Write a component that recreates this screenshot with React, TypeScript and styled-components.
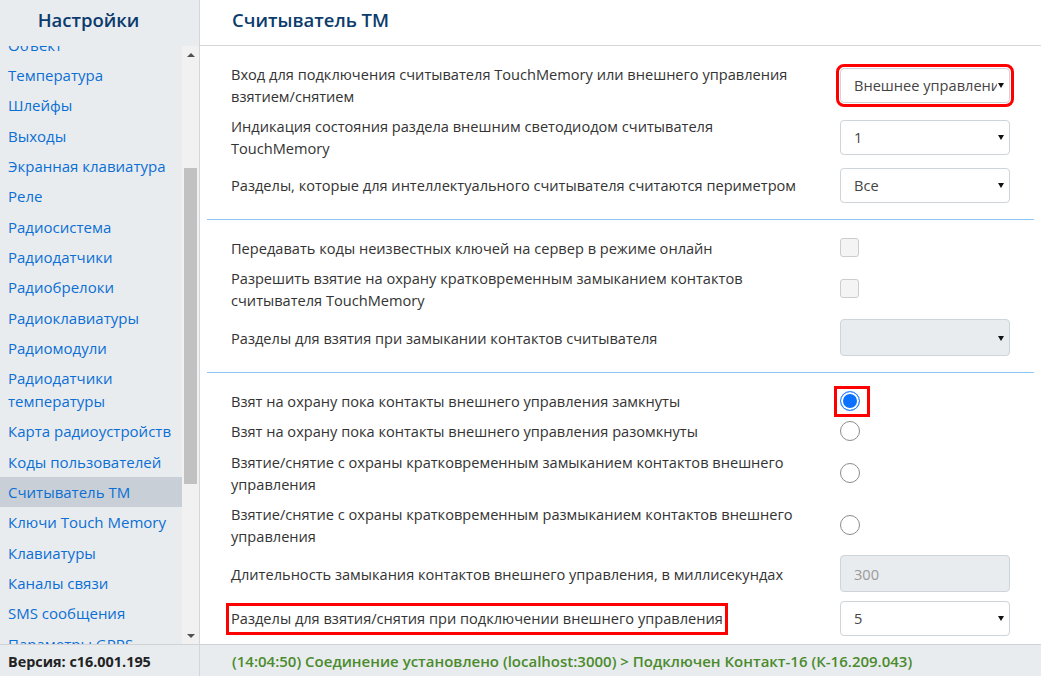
import React, { useLayoutEffect, useRef } from "react";
import styled, { createGlobalStyle } from "styled-components";

const GlobalStyle = createGlobalStyle`
  html, body {
    margin: 0;
    padding: 0;
    height: 100%;
  }
  body {
    font-family: "Open Sans", "Liberation Sans", sans-serif;
    background: #fff;
    color: #333;
    overflow: hidden;
  }
  #root {
    height: 100%;
  }
`;

const Page = styled.div`
  display: flex;
  flex-direction: column;
  height: 100vh;
`;

const Body = styled.div`
  flex: 1;
  display: flex;
  min-height: 0;
`;

/* ---------- sidebar ---------- */

const Sidebar = styled.aside`
  width: 199px;
  flex-shrink: 0;
  border-right: 1px solid #d2d5d9;
  background: #e9ecef;
  display: flex;
  flex-direction: column;
`;

const SidebarTitle = styled.div`
  height: 46px;
  line-height: 40px;
  padding-right: 22px;
  text-align: center;
  font-size: 18.5px;
  font-weight: 600;
  color: #0b3a6d;
`;

const SidebarScroll = styled.div`
  flex: 1;
  display: flex;
  min-height: 0;
`;

const NavViewport = styled.div`
  position: relative;
  flex: 1;
  overflow: hidden;
`;

const NavItem = styled.div<{ $active?: boolean }>`
  padding: 4px 8px;
  font-size: 15px;
  line-height: 22.35px;
  color: #0b6fd4;
  background: ${(p) => (p.$active ? "#c9cfd7" : "transparent")};
  cursor: pointer;
`;

const ScrollTrack = styled.div`
  width: 17px;
  background: #f1f1f1;
  display: flex;
  flex-direction: column;
`;

const ScrollArrow = styled.div<{ $down?: boolean }>`
  height: 17px;
  display: flex;
  align-items: center;
  justify-content: center;

  &::before {
    content: "";
    border-left: 4px solid transparent;
    border-right: 4px solid transparent;
    ${(p) =>
      p.$down
        ? "border-top: 4px solid #505050;"
        : "border-bottom: 4px solid #505050;"}
  }
`;

const ScrollRail = styled.div`
  flex: 1;
  padding: 105px 2px 0;
`;

const ScrollThumb = styled.div`
  height: 316px;
  background: #c1c1c1;
`;

/* ---------- main panel ---------- */

const Main = styled.main`
  flex: 1;
  display: flex;
  flex-direction: column;
  min-width: 0;
`;

const MainHeader = styled.h1`
  margin: 0;
  height: 45px;
  line-height: 40px;
  padding-left: 32px;
  border-bottom: 1px solid #d6d6d6;
  font-size: 18.5px;
  font-weight: 600;
  color: #0c3c6c;
`;

const Content = styled.div`
  flex: 1;
  overflow: hidden;
`;

const Section = styled.section`
  margin: 0 7px;
  padding: 17px 24px 16px;
  display: flex;
  flex-direction: column;
  gap: 8.3px;

  & + & {
    border-top: 1px solid #8cc4f5;
  }
`;

const Row = styled.div`
  display: grid;
  grid-template-columns: 1fr 170px;
  column-gap: 28px;
  align-items: center;
`;

const Label = styled.div`
  font-size: 14.6px;
  line-height: 22px;
  color: #333;
`;

const Marked = styled.span`
  position: relative;
  display: inline-block;

  &::after {
    content: "";
    position: absolute;
    top: -4px;
    bottom: -6px;
    left: -5px;
    right: -5px;
    border: 3px solid #ff0000;
    pointer-events: none;
  }
`;

const Control = styled.div`
  display: flex;
  align-items: center;
`;

const SelectBox = styled.div<{ $disabled?: boolean; $marked?: boolean }>`
  position: relative;
  box-sizing: border-box;
  width: 100%;
  height: ${(p) => (p.$disabled ? "37px" : "35px")};
  display: flex;
  align-items: center;
  padding: 0 12px 0 13px;
  border: 1px solid #ced4da;
  border-radius: 4px;
  background: ${(p) => (p.$disabled ? "#e9ecef" : "#fff")};
  font-size: 14.6px;
  color: #444;
  outline: ${(p) => (p.$marked ? "3px solid #ff0000" : "none")};
  outline-offset: 1px;

  &::after {
    content: "";
    position: absolute;
    right: 5px;
    top: 50%;
    margin-top: -2px;
    border-left: 3.5px solid transparent;
    border-right: 3.5px solid transparent;
    border-top: 5px solid #111;
  }
`;

const SelectValue = styled.span`
  flex: 1;
  overflow: hidden;
  white-space: nowrap;
`;

const NumberInput = styled.div`
  box-sizing: border-box;
  width: 100%;
  height: 37px;
  display: flex;
  align-items: center;
  padding: 0 13px;
  border: 1px solid #ced4da;
  border-radius: 4px;
  background: #e9ecef;
  font-size: 14.6px;
  color: #9a9a9a;
`;

const Checkbox = styled.span`
  box-sizing: border-box;
  width: 19px;
  height: 19px;
  border: 1px solid #cdcdcd;
  border-radius: 3px;
  background: #f4f4f4;
`;

const Radio = styled.span<{ $checked?: boolean }>`
  box-sizing: border-box;
  width: 20px;
  height: 20px;
  border-radius: 50%;
  border: 1px solid ${(p) => (p.$checked ? "#2f86ff" : "#8c8c8c")};
  background: ${(p) => (p.$checked ? "#0a72ff" : "#fff")};
  box-shadow: ${(p) => (p.$checked ? "inset 0 0 0 2px #fff" : "none")};
`;

const RadioMark = styled.span`
  position: relative;
  display: inline-flex;

  &::after {
    content: "";
    position: absolute;
    top: -5px;
    left: -6px;
    right: -10px;
    bottom: -6px;
    border: 3px solid #ff0000;
    pointer-events: none;
  }
`;

/* ---------- footer ---------- */

const Footer = styled.footer`
  height: 31px;
  flex-shrink: 0;
  display: flex;
  border-top: 1px solid #cfd3d7;
  background: #e9ecef;
  font-size: 15px;
  line-height: 29px;
`;

const Version = styled.div`
  width: 191px;
  padding: 2px 0 0 8px;
  border-right: 1px solid #d2d5d9;
  font-size: 14.4px;
  font-weight: 700;
  color: #222;
`;

const Status = styled.div`
  padding: 2px 0 0 32px;
  font-weight: 600;
  color: #4a8b2c;
  white-space: nowrap;
`;

const navItems = [
  "Общие",
  "Разделы",
  "Объект",
  "Температура",
  "Шлейфы",
  "Выходы",
  "Экранная клавиатура",
  "Реле",
  "Радиосистема",
  "Радиодатчики",
  "Радиобрелоки",
  "Радиоклавиатуры",
  "Радиомодули",
  "Радиодатчики температуры",
  "Карта радиоустройств",
  "Коды пользователей",
  "Считыватель ТМ",
  "Ключи Touch Memory",
  "Клавиатуры",
  "Каналы связи",
  "SMS сообщения",
  "Параметры GPRS",
  "Параметры Ethernet",
  "События",
];

const App = () => {
  const navRef = useRef<HTMLDivElement>(null);

  // keep the list scrolled so "Объект" sits half hidden under the title
  useLayoutEffect(() => {
    const el = navRef.current;
    if (!el) return;
    const item = el.querySelector<HTMLElement>('[data-name="Объект"]');
    if (item) el.scrollTop = item.offsetTop + 16;
  }, []);

  return (
    <>
      <GlobalStyle />
      <Page>
        <Body>
          <Sidebar>
            <SidebarTitle>Настройки</SidebarTitle>
            <SidebarScroll>
              <NavViewport ref={navRef}>
                {navItems.map((name) => (
                  <NavItem
                    key={name}
                    data-name={name}
                    $active={name === "Считыватель ТМ"}
                  >
                    {name === "Радиодатчики температуры" ? (
                      <>
                        Радиодатчики
                        <br />
                        температуры
                      </>
                    ) : (
                      name
                    )}
                  </NavItem>
                ))}
              </NavViewport>
              <ScrollTrack>
                <ScrollArrow />
                <ScrollRail>
                  <ScrollThumb />
                </ScrollRail>
                <ScrollArrow $down />
              </ScrollTrack>
            </SidebarScroll>
          </Sidebar>

          <Main>
            <MainHeader>Считыватель ТМ</MainHeader>
            <Content>
              <Section>
                <Row>
                  <Label>
                    Вход для подключения считывателя TouchMemory или внешнего управления
                    <br />
                    взятием/снятием
                  </Label>
                  <Control>
                    <SelectBox $marked>
                      <SelectValue>Внешнее управление</SelectValue>
                    </SelectBox>
                  </Control>
                </Row>
                <Row>
                  <Label>
                    Индикация состояния раздела внешним светодиодом считывателя
                    <br />
                    TouchMemory
                  </Label>
                  <Control>
                    <SelectBox>
                      <SelectValue>1</SelectValue>
                    </SelectBox>
                  </Control>
                </Row>
                <Row>
                  <Label>Разделы, которые для интеллектуального считывателя считаются периметром</Label>
                  <Control>
                    <SelectBox>
                      <SelectValue>Все</SelectValue>
                    </SelectBox>
                  </Control>
                </Row>
              </Section>

              <Section>
                <Row>
                  <Label>Передавать коды неизвестных ключей на сервер в режиме онлайн</Label>
                  <Control>
                    <Checkbox />
                  </Control>
                </Row>
                <Row>
                  <Label>
                    Разрешить взятие на охрану кратковременным замыканием контактов
                    <br />
                    считывателя TouchMemory
                  </Label>
                  <Control>
                    <Checkbox />
                  </Control>
                </Row>
                <Row>
                  <Label>Разделы для взятия при замыкании контактов считывателя</Label>
                  <Control>
                    <SelectBox $disabled>
                      <SelectValue />
                    </SelectBox>
                  </Control>
                </Row>
              </Section>

              <Section>
                <Row>
                  <Label>Взят на охрану пока контакты внешнего управления замкнуты</Label>
                  <Control>
                    <RadioMark>
                      <Radio $checked />
                    </RadioMark>
                  </Control>
                </Row>
                <Row>
                  <Label>Взят на охрану пока контакты внешнего управления разомкнуты</Label>
                  <Control>
                    <Radio />
                  </Control>
                </Row>
                <Row>
                  <Label>
                    Взятие/снятие с охраны кратковременным замыканием контактов внешнего
                    <br />
                    управления
                  </Label>
                  <Control>
                    <Radio />
                  </Control>
                </Row>
                <Row>
                  <Label>
                    Взятие/снятие с охраны кратковременным размыканием контактов внешнего
                    <br />
                    управления
                  </Label>
                  <Control>
                    <Radio />
                  </Control>
                </Row>
                <Row>
                  <Label>Длительность замыкания контактов внешнего управления, в миллисекундах</Label>
                  <Control>
                    <NumberInput>300</NumberInput>
                  </Control>
                </Row>
                <Row>
                  <Label>
                    <Marked>Разделы для взятия/снятия при подключении внешнего управления</Marked>
                  </Label>
                  <Control>
                    <SelectBox>
                      <SelectValue>5</SelectValue>
                    </SelectBox>
                  </Control>
                </Row>
              </Section>
            </Content>
          </Main>
        </Body>

        <Footer>
          <Version>Версия: c16.001.195</Version>
          <Status>(14:04:50) Соединение установлено (localhost:3000) &gt; Подключен Контакт-16 (К-16.209.043)</Status>
        </Footer>
      </Page>
    </>
  );
};

export default App;
